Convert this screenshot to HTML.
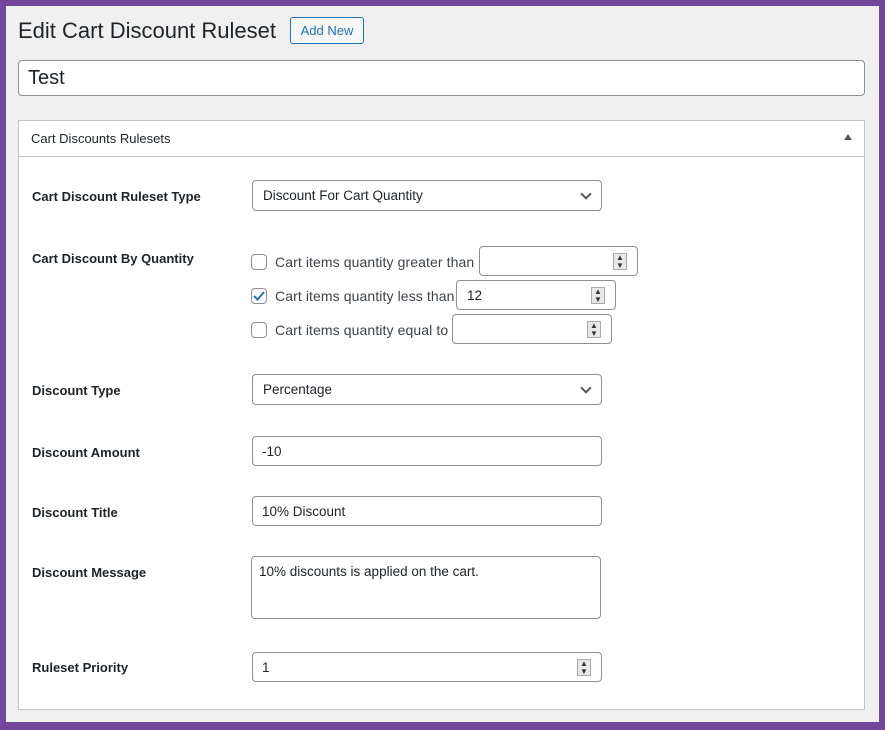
<!DOCTYPE html>
<html><head><style>
*{box-sizing:border-box}
body{margin:0;width:885px;height:730px;background:#72479a;font-family:"Liberation Sans",sans-serif;color:#1d2327;position:relative;overflow:hidden}
#in{position:absolute;left:6px;top:6px;width:873px;height:716px;background:#f0f0f1}
.a{position:absolute}
h1{position:absolute;left:18px;top:16px;margin:0;font-size:22px;font-weight:400;line-height:30px}
.btn{left:290px;top:17px;width:74px;height:27px;border:1px solid #2271b1;border-radius:3px;color:#2271b1;font-size:13px;line-height:25px;text-align:center;background:#f6f7f7}
.title{left:18px;top:60px;width:847px;height:36px;border:1px solid #8c8f94;border-radius:4px;background:#fff;font-size:20px;padding:6px 9px;line-height:22px}
.panel{left:18px;top:120px;width:847px;height:590px;background:#fff;border:1px solid #c3c4c7}
.hd{left:0;top:0;width:845px;height:36px;border-bottom:1px solid #c3c4c7;font-size:13px;padding:11px 12px;line-height:14px}
.lbl{font-size:13px;font-weight:bold;left:13px}
.f{border:1px solid #8c8f94;border-radius:4px;background:#fff;font-size:13.5px;padding:0 10px;height:31px;line-height:29px}
.sel::after{content:"";position:absolute;right:11px;top:9px;width:6px;height:6px;border-right:2px solid #50575e;border-bottom:2px solid #50575e;transform:rotate(45deg)}
.sp{position:absolute;right:10px;top:6px;width:14px;height:17px;border:1px solid #aaa;background:#e8e8e8;font-size:8px;line-height:8px;text-align:center;color:#333}
.cb{width:16px;height:16px;border:1px solid #8c8f94;border-radius:4px;background:#fff}
.ct{font-size:14px;color:#3c434a;letter-spacing:.1px}
</style></head><body><div id="in"></div>
<h1>Edit Cart Discount Ruleset</h1>
<div class="a btn">Add New</div>
<div class="a title">Test</div>
<div class="a panel">
<div class="a hd">Cart Discounts Rulesets<span style="position:absolute;right:12px;top:13px;width:0;height:0;border-left:4px solid transparent;border-right:4px solid transparent;border-bottom:6px solid #50575e"></span></div>
<div class="a lbl" style="top:68px">Cart Discount Ruleset Type</div>
<div class="a f sel" style="left:233px;top:59px;width:350px">Discount For Cart Quantity</div>
<div class="a lbl" style="top:130px">Cart Discount By Quantity</div>
<div class="a cb" style="left:232px;top:133px"></div><div class="a ct" style="left:256px;top:133px">Cart items quantity greater than</div>
<div class="a f" style="left:460px;top:125px;width:159px;height:30px"><span class="sp">▲<br>▼</span></div>
<div class="a cb" style="left:232px;top:167px"><svg width="14" height="14" style="position:absolute;left:0;top:0"><path d="M2 7l3.5 3.5L12 3" stroke="#2271b1" stroke-width="2" fill="none"/></svg></div><div class="a ct" style="left:256px;top:167px">Cart items quantity less than</div>
<div class="a f" style="left:437px;top:159px;width:160px;height:30px">12<span class="sp">▲<br>▼</span></div>
<div class="a cb" style="left:232px;top:201px"></div><div class="a ct" style="left:256px;top:201px">Cart items quantity equal to</div>
<div class="a f" style="left:433px;top:193px;width:160px;height:30px"><span class="sp">▲<br>▼</span></div>
<div class="a lbl" style="top:262px">Discount Type</div>
<div class="a f sel" style="left:233px;top:253px;width:350px">Percentage</div>
<div class="a lbl" style="top:324px">Discount Amount</div>
<div class="a f" style="left:233px;top:315px;width:350px;height:30px;padding-left:9px">-10</div>
<div class="a lbl" style="top:384px">Discount Title</div>
<div class="a f" style="left:233px;top:375px;width:350px;height:30px;padding-left:9px">10% Discount</div>
<div class="a lbl" style="top:444px">Discount Message</div>
<div class="a f" style="left:232px;top:435px;width:350px;height:63px;line-height:18px;padding:6px 7px">10% discounts is applied on the cart.</div>
<div class="a lbl" style="top:539px">Ruleset Priority</div>
<div class="a f" style="left:233px;top:531px;width:350px;height:30px;padding-left:9px">1<span class="sp">▲<br>▼</span></div>
</div>
</body></html>
